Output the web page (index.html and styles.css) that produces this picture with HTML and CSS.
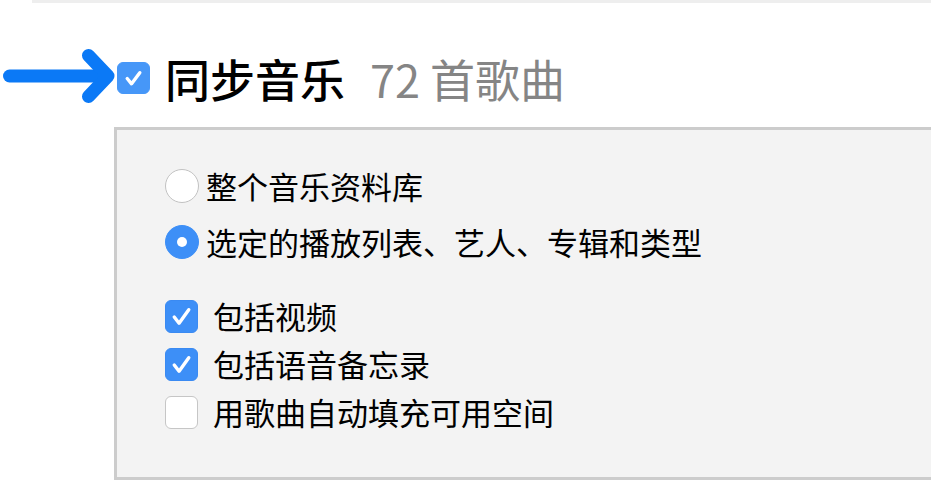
FILE: index.html
```html
<!DOCTYPE html>
<html lang="zh-CN">
<head>
<meta charset="utf-8">
<title>同步音乐</title>
<link rel="stylesheet" href="styles.css">
</head>
<body>
  <div class="prev-section"></div>

  <div class="sync-header">
    <svg class="pointer" width="116" height="60" viewBox="0 0 116 60" aria-hidden="true">
      <line x1="9.5" y1="28" x2="106" y2="28" />
      <polyline points="88.5,7.5 108,28 88.5,48.5" />
    </svg>
    <span class="checkbox checked big">
      <svg viewBox="0 0 32 32"><polyline points="9.5,16.5 14,22 22.5,10.5" /></svg>
    </span>
    <h1 class="sync-title">同步音乐<span class="count">72 首歌曲</span></h1>
  </div>

  <div class="sync-panel">
    <div class="radio-row">
      <span class="radio"></span>
      <span class="label">整个音乐资料库</span>
    </div>
    <div class="radio-row">
      <span class="radio selected"></span>
      <span class="label">选定的播放列表、艺人、专辑和类型</span>
    </div>

    <div class="check-list">
      <div class="check-row">
        <span class="checkbox checked">
          <svg viewBox="0 0 32 32"><polyline points="8.5,17 13.5,23.5 23.5,9.5" /></svg>
        </span>
        <span class="label">包括视频</span>
      </div>
      <div class="check-row">
        <span class="checkbox checked">
          <svg viewBox="0 0 32 32"><polyline points="8.5,17 13.5,23.5 23.5,9.5" /></svg>
        </span>
        <span class="label">包括语音备忘录</span>
      </div>
      <div class="check-row">
        <span class="checkbox"></span>
        <span class="label">用歌曲自动填充可用空间</span>
      </div>
    </div>
  </div>
</body>
</html>
```

FILE: styles.css
```css
html, body {
  margin: 0;
  padding: 0;
  background: #ffffff;
}

body {
  font-family: "Noto Sans CJK SC", "Noto Sans", sans-serif;
  color: #000;
  overflow: hidden;
}

/* edge of the section above */
.prev-section {
  margin-left: 32px;
  height: 3px;
  background: #eeeeee;
}

/* header: pointer arrow, checkbox, title */
.sync-header {
  display: flex;
  align-items: center;
  height: 60px;
  margin-top: 45px;
}

.pointer {
  flex: none;
  width: 116px;
  height: 60px;
  margin-right: 1px;
}

.pointer line,
.pointer polyline {
  fill: none;
  stroke: #0b79f6;
  stroke-width: 13;
  stroke-linecap: round;
  stroke-linejoin: round;
}

.sync-title {
  margin: 0 0 0 15px;
  font-size: 45px;
  font-weight: 500;
  line-height: 60px;
  white-space: nowrap;
  position: relative;
  top: 1px;
}

.sync-title .count {
  color: #858585;
  font-weight: 400;
  margin-left: 25px;
}

/* checkboxes */
.checkbox {
  flex: none;
  box-sizing: border-box;
  width: 33px;
  height: 33px;
  border-radius: 6px;
  background: #ffffff;
  border: 1px solid #c6c6c6;
  display: flex;
  align-items: center;
  justify-content: center;
}

.checkbox.checked {
  background: #3d8ff7;
  border-color: #3a8af2;
}

.checkbox.big {
  width: 33px;
  height: 32px;
  background: #4697f8;
  border-color: #4697f8;
}

.checkbox svg {
  width: 32px;
  height: 32px;
}

.checkbox svg polyline {
  fill: none;
  stroke: #ffffff;
  stroke-width: 3.5;
  stroke-linecap: round;
  stroke-linejoin: round;
}

/* options panel */
.sync-panel {
  margin: 19px 0 0 114px;
  height: 319px;
  background: #f3f3f3;
  border: 3px solid #cccccc;
  border-right: none;
  padding: 28px 0 0 48px;
  box-sizing: content-box;
}

.radio-row {
  display: flex;
  align-items: center;
  height: 56px;
}

.radio {
  flex: none;
  box-sizing: border-box;
  width: 34px;
  height: 34px;
  border-radius: 50%;
  background: #ffffff;
  border: 1.5px solid #c2c2c2;
}

.radio.selected {
  background: #3d8ff7;
  border-color: #3d8ff7;
  display: flex;
  align-items: center;
  justify-content: center;
}

.radio.selected::after {
  content: "";
  width: 10px;
  height: 10px;
  border-radius: 50%;
  background: #ffffff;
}

.label {
  font-size: 31px;
  line-height: 40px;
  white-space: nowrap;
}

.radio-row .label {
  margin-left: 7px;
}

.check-list {
  margin-top: 22px;
}

.check-row {
  display: flex;
  align-items: center;
  height: 48px;
}

.check-row .label {
  margin-left: 15px;
}
```
